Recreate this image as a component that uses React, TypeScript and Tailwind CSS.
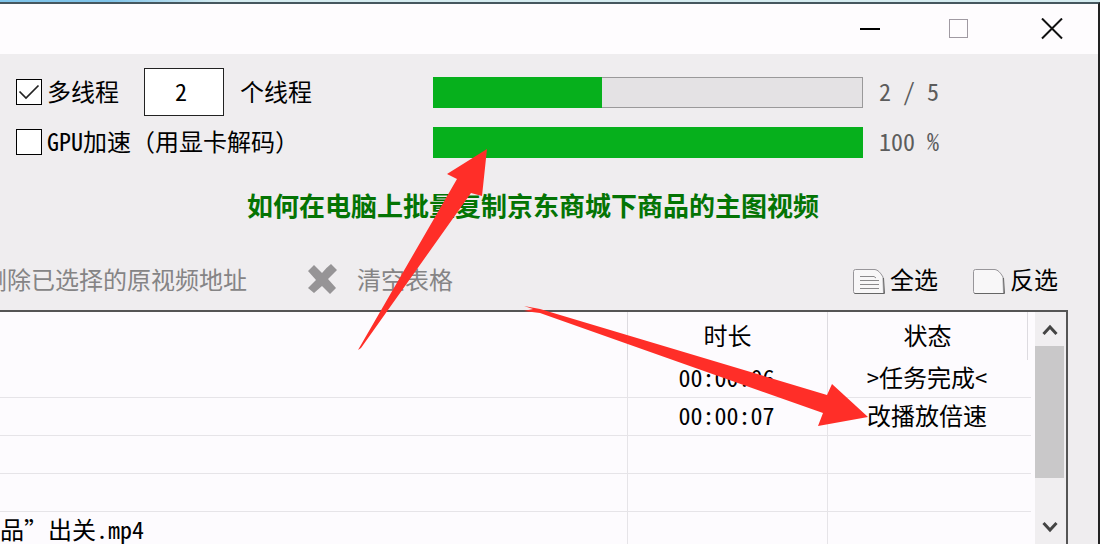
import React, { useState } from 'react';

interface Task {
  name: string;
  duration: string;
  status: string;
}

const TASKS: Task[] = [
  { name: '', duration: '00:00:06', status: '>任务完成<' },
  { name: '', duration: '00:00:07', status: '改播放倍速' },
  { name: '', duration: '', status: '' },
  { name: '', duration: '', status: '' },
  { name: '品”出关.mp4', duration: '', status: '' },
];

interface CheckOptionProps {
  label: string;
  defaultChecked?: boolean;
}

const CheckOption: React.FC<CheckOptionProps> = ({ label, defaultChecked }) => (
  <label className="flex items-center gap-[5px] whitespace-nowrap">
    <span className="relative flex">
      <input
        type="checkbox"
        defaultChecked={defaultChecked}
        className="peer h-[26px] w-[26px] appearance-none border border-black bg-white"
      />
      <svg
        viewBox="0 0 26 26"
        className="pointer-events-none absolute inset-0 hidden h-full w-full peer-checked:block"
      >
        <path d="M3.5 12.5 10 19 22.5 6.5" fill="none" stroke="#222" strokeWidth="1.7" />
      </svg>
    </span>
    <span className="pb-0.5">{label}</span>
  </label>
);

interface ProgressProps {
  label: string;
  percent: number;
  text: string;
}

const Progress: React.FC<ProgressProps> = ({ label, percent, text }) => (
  <div className="flex flex-1 items-center">
    <div
      role="progressbar"
      aria-label={label}
      aria-valuenow={percent}
      className="h-[31px] flex-1 border border-[#9a999a] bg-[#e4e2e4]"
    >
      <div className="-m-px h-[31px] bg-[#06b01c]" style={{ width: `calc(${percent}% + 2px)` }} />
    </div>
    <span className="w-[235px] pb-0.5 pl-4 font-light whitespace-pre text-[#5c5c5c]">{text}</span>
  </div>
);

const PageIcon: React.FC<{ lines?: boolean }> = ({ lines }) => (
  <svg width="33" height="27" viewBox="0 0 33 27" fill="none" className="mt-1">
    <path
      d="M2.5 1.5H22Q26 2 30 9L30.5 25.5H2.5Q.5 25.5 .5 23.5V3.5Q.5 1.5 2.5 1.5Z"
      fill="#f8f7f8"
      stroke="#98969a"
    />
    <path d="M1.5 25.5H31.5L30.5 10" stroke="#666" />
    {lines && (
      <path d="M7 8.5H21L23 10M7 12.5H26M7 16.5H26M7 20.5H26" stroke="#8a898b" />
    )}
  </svg>
);

const TitleBar = () => (
  <header className="flex h-[50px] items-center justify-end bg-[#fefcfe] pr-[35px]">
    <button aria-label="最小化" className="mr-[67px]">
      <svg width="22" height="22" viewBox="0 0 22 22">
        <path d="M1 11H21" stroke="#000" strokeWidth="2" />
      </svg>
    </button>
    <button aria-label="最大化" className="mr-[71px]">
      <svg width="22" height="22" viewBox="0 0 22 22">
        <rect x="1.5" y="1.5" width="18" height="18" fill="none" stroke="#a09aa2" />
      </svg>
    </button>
    <button aria-label="关闭">
      <svg width="22" height="22" viewBox="0 0 22 22">
        <path d="M1 .5 21 20.5M21 .5 1 20.5" stroke="#111" strokeWidth="2" />
      </svg>
    </button>
  </header>
);

// red pointers drawn over the window
const Pointers = () => (
  <svg
    className="pointer-events-none absolute top-0 left-0"
    width="1100"
    height="544"
    viewBox="0 0 1100 544"
    fill="#ff2e28"
  >
    <path d="M358 350 457 179 447 174 487 149 482 196 471 193 361 348Z" />
    <path d="M524 306 540 309 827 395 832 384 868 417 818 426 823 413 540 313 524 311 533 309Z" />
  </svg>
);

export default function App() {
  const [threads, setThreads] = useState('2');

  return (
    <div
      lang="zh-CN"
      className="relative flex h-screen flex-col overflow-hidden bg-[#efedef] font-['Noto_Sans_Mono_CJK_SC','Noto_Sans_CJK_SC',monospace] text-2xl leading-8 text-black"
    >
      <div className="h-0.5 shrink-0 bg-linear-to-r from-[#7fc4ea] from-10% to-[#d5ecf0] to-20%" />
      <div className="flex min-h-0 flex-1 flex-col border-t-2 border-r-2 border-t-[#46575f] border-r-[#222]">
        <TitleBar />

        <section className="flex flex-col pt-[13px] pl-4">
          <div className="flex h-[50px] items-center">
            <div className="flex w-[417px] items-center">
              <CheckOption label="多线程" defaultChecked />
              <label className="ml-[25px] flex items-center gap-4">
                <input
                  type="text"
                  value={threads}
                  onChange={(e) => setThreads(e.target.value)}
                  className="h-12 w-20 border border-[#222] bg-white pr-1.5 pb-1 text-center"
                />
                <span className="pb-0.5">个线程</span>
              </label>
            </div>
            <Progress label="任务进度" percent={39} text="2 / 5" />
          </div>
          <div className="flex h-[50px] items-center">
            <div className="w-[417px]">
              <CheckOption label="GPU加速（用显卡解码）" />
            </div>
            <Progress label="当前文件进度" percent={100} text="100 %" />
          </div>
        </section>

        <h1 className="mt-[22px] pr-8 text-center text-[26px] leading-8 font-bold text-[#047404]">
          如何在电脑上批量复制京东商城下商品的主图视频
        </h1>

        <div className="mt-[42px] flex h-[47px] items-start pr-10">
          <button className="-ml-[17px] font-light whitespace-nowrap text-[#858485]">
            删除已选择的原视频地址
          </button>
          <button className="ml-[60px] flex items-center gap-[19px] font-light whitespace-nowrap text-[#858485]">
            <svg width="31" height="31" viewBox="0 0 31 31" fill="#969496">
              <path d="M1 7 7 1 15 9Q20 3 24 0L30 6 21 15 29 24 23 30 15 22 7 29 1 24 9 16Z" />
            </svg>
            清空表格
          </button>
          <button className="ml-auto flex items-center gap-1 whitespace-nowrap">
            <PageIcon lines />
            全选
          </button>
          <button className="ml-[35px] flex items-center gap-1 whitespace-nowrap">
            <PageIcon />
            反选
          </button>
        </div>

        <div className="mr-[30px] flex min-h-0 flex-1 border-t-2 border-r-2 border-[#555] bg-[#fdfbfe]">
          <div className="min-w-0 flex-1 overflow-hidden pr-1">
            <table className="w-full table-fixed border-separate border-spacing-0">
              <thead>
                <tr className="h-12">
                  <th aria-label="文件名" className="border-r border-[#dddbe0] p-0" />
                  <th className="w-[200px] border-r border-[#dddbe0] p-0 pb-0.5 font-normal">时长</th>
                  <th className="w-[200px] border-r border-[#dddbe0] p-0 pb-0.5 font-normal">状态</th>
                  <th aria-label="空" className="w-[3px] p-0" />
                </tr>
              </thead>
              <tbody>
                {TASKS.map((task, index) => (
                  <tr key={index} className="h-[38px]">
                    <td className="border-r border-b border-[#e6e4e8] p-0 pb-1 whitespace-nowrap">{task.name}</td>
                    <td className="border-r border-b border-[#e6e4e8] p-0 pr-0.5 pb-1 text-center">{task.duration}</td>
                    <td className="border-b border-[#e6e4e8] p-0 pr-0.5 pb-1 text-center">{task.status}</td>
                    <td className="border-b border-[#e6e4e8] p-0" />
                  </tr>
                ))}
              </tbody>
            </table>
          </div>
          <div className="flex w-[31px] flex-col bg-[#f0eef0] pr-0.5">
            <button aria-label="向上滚动" className="flex h-[34px] items-center justify-center pt-0.5">
              <svg width="16" height="14" viewBox="0 0 16 14">
                <path d="M1.5 11 8 4 14.5 11" fill="none" stroke="#444" strokeWidth="3" />
              </svg>
            </button>
            <div className="h-[132px] bg-[#c9c8c9]" />
            <button aria-label="向下滚动" className="mt-auto flex h-[34px] items-center justify-center">
              <svg width="16" height="14" viewBox="0 0 16 14">
                <path d="M1.5 3 8 10 14.5 3" fill="none" stroke="#444" strokeWidth="3" />
              </svg>
            </button>
          </div>
        </div>
      </div>
      <Pointers />
    </div>
  );
}
